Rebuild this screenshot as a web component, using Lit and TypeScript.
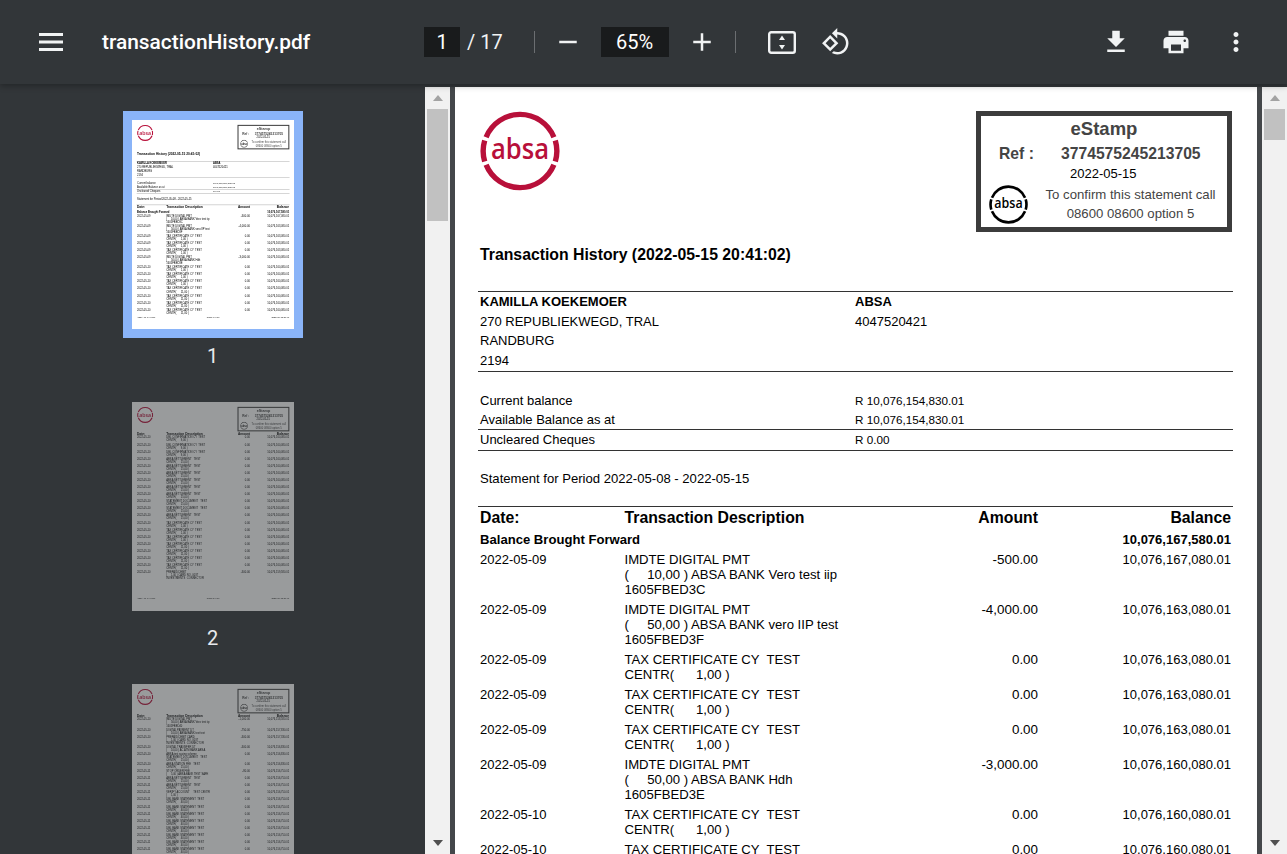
import { LitElement, html, css, svg, nothing } from 'lit';
import { customElement, property } from 'lit/decorators.js';

type Row = { date: string; lines: string[]; amount: string; balance: string };

const row = (date: string, text: string, amount: string, balance: string): Row => ({
  date,
  lines: text.split('\n'),
  amount,
  balance,
});

const tax = (date: string, n: string, balance: string) =>
  row(date, `TAX CERTIFICATE CY  TEST\nCENTR(      ${n} )`, '0.00', balance);

const BAL = '10,076,163,080.01';
const BAL2 = '10,076,160,080.01';

const PAGE_ONE: Row[] = [
  row('2022-05-09', 'IMDTE DIGITAL PMT\n(     10,00 ) ABSA BANK Vero test iip\n1605FBED3C', '-500.00', '10,076,167,080.01'),
  row('2022-05-09', 'IMDTE DIGITAL PMT\n(     50,00 ) ABSA BANK vero IIP test\n1605FBED3F', '-4,000.00', BAL),
  tax('2022-05-09', '1,00', BAL),
  tax('2022-05-09', '1,00', BAL),
  tax('2022-05-09', '1,00', BAL),
  row('2022-05-09', 'IMDTE DIGITAL PMT\n(     50,00 ) ABSA BANK Hdh\n1605FBED3E', '-3,000.00', BAL2),
  tax('2022-05-10', '1,00', BAL2),
  tax('2022-05-10', '1,00', BAL2),
  tax('2022-05-10', '1,00', BAL2),
  tax('2022-05-10', '11,00', BAL2),
  tax('2022-05-10', '11,00', BAL2),
  tax('2022-05-10', '11,00', BAL2),
  tax('2022-05-10', '11,00', BAL2),
];

const PAGE_TWO: Row[] = [
  ...Array.from({ length: 3 }, () => row('2022-05-10', 'DBL CONFIRMATION CY  TEST\nCENTR(      9,00 )', '0.00', BAL2)),
  ...Array.from({ length: 6 }, () => row('2022-05-10', 'ABSA SETTLEMENT   TEST\nCENTR(      15,00 )', '0.00', BAL2)),
  ...Array.from({ length: 2 }, () => row('2022-05-10', 'STATEMENT DOCUMENT   TEST\nCENTR(      15,00 )', '0.00', BAL2)),
  row('2022-05-10', 'ABSA SETTLEMENT   TEST\nCENTR(      15,00 )', '0.00', BAL2),
  ...Array.from({ length: 3 }, () => tax('2022-05-10', '1,00', BAL2)),
  ...Array.from({ length: 4 }, () => tax('2022-05-10', '11,00', BAL2)),
  row('2022-05-10', 'PREPAID DEBIT\n(     1,00 ) CARD NO. 0037\nINVESTMENTS  CONNECTOR', '-500.00', '10,076,159,580.01'),
];

const PAGE_THREE: Row[] = [
  row('2022-05-10', 'IMDTE DIGITAL PMT\n(     50,00 ) ABSA BANK Vero test iip\n1605FBED40', '-1,000.00', '10,076,158,580.01'),
  row('2022-05-10', 'DIGITAL PAYMENT DT\n(     10,00 ) ABSA BANK test test', '-750.00', '10,076,157,830.01'),
  row('2022-05-10', 'PREPAID DEBIT CARD\n(     1,00 ) CARD NO. 0037\nINVESTMENTS  CONNECTOR', '-500.00', '10,076,157,330.01'),
  row('2022-05-10', 'DIGITAL TRANSFER DT\n(     10,00 ) AC ATM BANK ABSA', '-500.00', '10,076,156,830.01'),
  row('2022-05-10', 'ABSA test saving scheme\nSTATEMENT DOCUMENT   TEST\nCENTR(      15,00 )', '0.00', '10,076,156,830.01'),
  row('2022-05-10', 'ABSA STATION FEE   TEST\nCENTR(      15,00 )', '0.00', '10,076,156,830.01'),
  row('2022-05-11', 'STOP ORDER FEE\n(     5,00 ) ABSA BANK TEST SAFE', '-80.00', '10,076,156,750.01'),
  ...Array.from({ length: 2 }, () => row('2022-05-11', 'ABSA SETTLEMENT   TEST\nCENTR(      15,00 )', '0.00', '10,076,156,750.01')),
  row('2022-05-11', 'VERIFY ACCOUNT     TEST CENTR\n(     1,00 )', '0.00', '10,076,156,750.01'),
  ...Array.from({ length: 8 }, () => row('2022-05-11', 'DBL BANK STATEMENT  TEST\nCENTR(      40,00 )', '0.00', '10,076,156,750.01')),
];

@customElement('absa-logo')
class AbsaLogo extends LitElement {
  static styles = css`
    :host {
      display: block;
      color: inherit;
    }
    svg {
      display: block;
      width: 100%;
      height: 100%;
    }
    text {
      font-family: 'Open Sans', sans-serif;
      font-weight: 600;
      font-size: 28px;
      fill: currentColor;
    }
    path {
      fill: none;
      stroke: currentColor;
      stroke-width: 5.4;
    }
  `;

  render() {
    return html`<svg viewBox="0 0 80 80">
      ${svg`
        <path d="M6.1 26.2 A36.6 36.6 0 0 1 73.9 26.2"/>
        <path d="M6.1 53.8 A36.6 36.6 0 0 0 73.9 53.8"/>
        <path d="M4.7 29.5 A36.6 36.6 0 0 0 4.7 50.5"/>
        <path d="M75.3 29.5 A36.6 36.6 0 0 1 75.3 50.5"/>
        <text x="40" y="48" text-anchor="middle" textLength="58" lengthAdjust="spacingAndGlyphs">absa</text>
      `}
    </svg>`;
  }
}

@customElement('statement-page')
class StatementPage extends LitElement {
  static styles = css`
    :host {
      display: flex;
      flex-direction: column;
      box-sizing: border-box;
      width: 802px;
      height: 1035px;
      padding: 24px 24px 0 23px;
      background: #fff;
      color: #000;
      font-family: 'Liberation Sans', Arial, sans-serif;
      font-size: 13px;
      line-height: 15px;
    }
    .top {
      display: flex;
      justify-content: space-between;
      align-items: flex-start;
      padding-left: 2px;
    }
    absa-logo.brand {
      width: 80px;
      height: 80px;
      color: #b8103a;
    }
    .stamp {
      box-sizing: border-box;
      width: 256px;
      height: 121px;
      margin-right: 1px;
      border: 5px solid #3c3c3c;
      color: #444;
    }
    .stamp-title {
      margin-top: 3px;
      text-align: center;
      font-size: 18.5px;
      line-height: 20px;
      font-weight: 700;
    }
    .stamp-ref {
      display: grid;
      grid-template-columns: 62px auto;
      margin-top: 5px;
      padding-left: 18px;
      font-size: 15.7px;
      line-height: 20px;
      font-weight: 700;
    }
    .stamp-date {
      padding-left: 89px;
      color: #000;
      line-height: 20px;
    }
    .stamp-foot {
      display: grid;
      grid-template-columns: 39px 1fr;
      padding-left: 8px;
      align-items: center;
    }
    absa-logo.mini {
      width: 39px;
      height: 39px;
      margin-top: 1px;
      color: #000;
    }
    .stamp-note {
      text-align: center;
      padding-left: 16px;
      padding-right: 10px;
      line-height: 19px;
      font-size: 13.2px;
      white-space: nowrap;
    }
    h1 {
      margin: 13px 0 0;
      padding-left: 2px;
      font-size: 15.8px;
      line-height: 20px;
      font-weight: 700;
    }
    .holder {
      display: grid;
      grid-template-columns: 375px 1fr;
      margin-top: 26px;
      padding: 0 2px 1px;
      border-top: 1px solid #333;
      border-bottom: 1px solid #333;
      font-size: 13px;
      line-height: 19.5px;
    }
    .strong {
      font-weight: 700;
    }
    .balances {
      margin-top: 19px;
      font-size: 13px;
    }
    .bal-row {
      display: grid;
      grid-template-columns: 375px 1fr;
      padding: 0 2px;
      line-height: 19px;
    }
    .bal-row span:last-child {
      font-size: 11.7px;
    }
    .bal-row.ruled {
      line-height: 20px;
      border-top: 1px solid #333;
      border-bottom: 1px solid #333;
    }
    .period {
      margin-top: 20px;
      padding-left: 2px;
      font-size: 13.1px;
    }
    .table {
      margin-top: 3px;
    }
    .table.first {
      margin-top: 20px;
      border-top: 1px solid #333;
    }
    .grid {
      display: grid;
      grid-template-columns: 144.5px 1fr 100px 193px;
      padding: 0 2px;
    }
    .grid > :nth-child(n + 3) {
      text-align: right;
    }
    .head {
      padding-top: 2px;
      font-size: 15.8px;
      line-height: 18px;
      font-weight: 700;
    }
    .forward {
      margin-top: 5px;
      margin-bottom: 5px;
      font-size: 13.1px;
      line-height: 15px;
      font-weight: 700;
    }
    .forward span:first-child {
      grid-column: 1 / 3;
    }
    .forward span:last-child {
      grid-column: 4;
      text-align: right;
      font-size: 13px;
    }
    .row {
      padding-bottom: 5px;
      font-size: 13px;
    }
    .row .desc {
      font-size: 13.15px;
      white-space: pre;
    }
    .row .amount {
      font-size: 13.4px;
    }
    .footer {
      display: grid;
      grid-template-columns: 1fr auto 1fr;
      margin-top: auto;
      margin-bottom: 57px;
      padding: 0 2px;
      font-size: 11px;
    }
    .footer span:last-child {
      text-align: right;
    }
  `;

  @property({ type: Number }) page = 1;
  @property({ attribute: false }) rows: Row[] = [];

  private _stamp() {
    return html`
      <div class="stamp">
        <div class="stamp-title">eStamp</div>
        <div class="stamp-ref"><span>Ref :</span><span>3774575245213705</span></div>
        <div class="stamp-date">2022-05-15</div>
        <div class="stamp-foot">
          <absa-logo class="mini"></absa-logo>
          <div class="stamp-note">To confirm this statement call<br />08600 08600 option 5</div>
        </div>
      </div>
    `;
  }

  private _intro() {
    return html`
      <h1>Transaction History (2022-05-15 20:41:02)</h1>
      <div class="holder">
        <span class="strong">KAMILLA KOEKEMOER</span><span class="strong">ABSA</span>
        <span>270 REPUBLIEKWEGD, TRAL</span><span>4047520421</span>
        <span>RANDBURG</span><span></span>
        <span>2194</span><span></span>
      </div>
      <div class="balances">
        <div class="bal-row"><span>Current balance</span><span>R 10,076,154,830.01</span></div>
        <div class="bal-row"><span>Available Balance as at</span><span>R 10,076,154,830.01</span></div>
        <div class="bal-row ruled"><span>Uncleared Cheques</span><span>R 0.00</span></div>
      </div>
      <div class="period">Statement for Period 2022-05-08 - 2022-05-15</div>
    `;
  }

  render() {
    const first = this.page === 1;
    return html`
      <div class="top">
        <absa-logo class="brand"></absa-logo>
        ${this._stamp()}
      </div>
      ${first ? this._intro() : nothing}
      <div class="table ${first ? 'first' : ''}">
        <div class="grid head">
          <span>Date:</span><span>Transaction Description</span><span>Amount</span><span>Balance</span>
        </div>
        ${first
          ? html`<div class="grid forward"><span>Balance Brought Forward</span><span>10,076,167,580.01</span></div>`
          : nothing}
        ${this.rows.map(
          (r) => html`
            <div class="grid row">
              <span>${r.date}</span>
              <span class="desc">${r.lines.join('\n')}</span>
              <span class="amount">${r.amount}</span>
              <span>${r.balance}</span>
            </div>
          `
        )}
      </div>
      <div class="footer">
        <span>ABSA-01-04-0190</span>
        <span>Page ${this.page} of 17</span>
        <span>2022-05-15 20:41</span>
      </div>
    `;
  }
}

@customElement('v-scrollbar')
class VScrollbar extends LitElement {
  static styles = css`
    :host {
      display: flex;
      flex-direction: column;
      flex: none;
      width: 25px;
      background: #f1f1f1;
    }
    .arrow {
      flex: none;
      height: 22px;
      display: flex;
      align-items: center;
      justify-content: center;
    }
    .arrow i {
      width: 0;
      height: 0;
      border-left: 5.5px solid transparent;
      border-right: 5.5px solid transparent;
    }
    .up i {
      border-bottom: 6px solid #a3a3a3;
    }
    .down i {
      border-top: 6px solid #505050;
    }
    .track {
      flex: 1;
      padding: 0 2px;
    }
    .thumb {
      background: #c1c1c1;
    }
  `;

  @property({ type: Number }) size = 100;

  render() {
    return html`
      <div class="arrow up"><i></i></div>
      <div class="track"><div class="thumb" style="height:${this.size}px"></div></div>
      <div class="arrow down"><i></i></div>
    `;
  }
}

const MD = {
  minus: 'M19 13H5v-2h14v2z',
  plus: 'M19 13h-6v6h-2v-6H5v-2h6V5h2v6h6v2z',
  rotate:
    'M7.34 6.41L.86 12.9l6.49 6.48 6.49-6.48-6.5-6.49zM3.69 12.9l3.66-3.66L11 12.9l-3.66 3.66-3.65-3.66zm15.67-6.26C17.61 4.88 15.3 4 13 4V.76L8.76 5 13 9.24V6c1.79 0 3.58.68 4.95 2.05 2.73 2.73 2.73 7.17 0 9.9C16.58 19.32 14.79 20 13 20c-.97 0-1.94-.21-2.84-.61l-1.49 1.49C10.02 21.62 11.51 22 13 22c2.3 0 4.61-.88 6.36-2.64 3.52-3.51 3.52-9.21 0-12.72z',
  download: 'M19 9h-4V3H9v6H5l7 7 7-7zM5 18v2h14v-2H5z',
  print:
    'M19 8H5c-1.66 0-3 1.34-3 3v6h4v4h12v-4h4v-6c0-1.66-1.34-3-3-3zm-3 11H8v-5h8v5zm3-7c-.55 0-1-.45-1-1s.45-1 1-1 1 .45 1 1-.45 1-1 1zm-1-9H6v4h12V3z',
  dots: 'M12 8c1.1 0 2-.9 2-2s-.9-2-2-2-2 .9-2 2 .9 2 2 2zm0 2c-1.1 0-2 .9-2 2s.9 2 2 2 2-.9 2-2-.9-2-2-2zm0 6c-1.1 0-2 .9-2 2s.9 2 2 2 2-.9 2-2-.9-2-2-2z',
};

const icon = (d: string) => html`<svg class="icon" viewBox="0 0 24 24"><path d=${d}></path></svg>`;

@customElement('app-root')
export class AppRoot extends LitElement {
  static styles = css`
    :host {
      display: block;
      height: 100vh;
      overflow: hidden;
      background: #323639;
      font-family: Roboto, sans-serif;
      color: #f1f3f4;
    }
    .toolbar {
      position: relative;
      z-index: 2;
      display: flex;
      align-items: center;
      box-sizing: border-box;
      height: 84px;
      background: #323639;
      box-shadow: 0 2px 6px rgba(0, 0, 0, 0.3);
    }
    .left {
      flex: none;
      width: 424px;
      display: flex;
      align-items: center;
      padding-left: 39px;
      box-sizing: border-box;
    }
    .menu {
      display: block;
      width: 24px;
      height: 18px;
      fill: #f1f3f4;
    }
    .title {
      margin-left: 39px;
      font-size: 20.9px;
      font-weight: 500;
      color: #fff;
      white-space: nowrap;
    }
    .center {
      display: flex;
      align-items: center;
    }
    .field {
      display: flex;
      align-items: center;
      justify-content: center;
      height: 30px;
      background: #191b1c;
      font-size: 20px;
      color: #fff;
    }
    .field.page {
      width: 36px;
    }
    .field.zoom {
      width: 68px;
      margin-left: 17.5px;
    }
    .total {
      width: 74px;
      padding-left: 7px;
      box-sizing: border-box;
      font-size: 20px;
    }
    .sep {
      width: 1px;
      height: 22px;
      background: #6b6e71;
    }
    .icon {
      display: block;
      flex: none;
      width: 30px;
      height: 30px;
      fill: #f1f3f4;
    }
    .minus {
      margin-left: 18px;
    }
    .plus {
      margin-left: 18px;
    }
    .sep.second {
      margin-left: 18.5px;
    }
    .fit {
      margin-left: 31px;
      width: 30px;
      height: 30px;
    }
    .fit rect {
      fill: none;
      stroke: #f1f3f4;
      stroke-width: 2.4;
    }
    .rotate {
      margin-left: 24px;
    }
    .right {
      margin-left: auto;
      display: flex;
      align-items: center;
      gap: 30px;
      padding-right: 36px;
    }
    .body {
      display: flex;
      height: calc(100vh - 84px);
    }
    .sidebar {
      flex: none;
      width: 425px;
      overflow: hidden;
      display: flex;
      flex-direction: column;
      align-items: center;
      padding-top: 27px;
      box-sizing: border-box;
    }
    .thumb-item {
      flex: none;
      display: flex;
      flex-direction: column;
      align-items: center;
      margin-bottom: 24px;
    }
    .thumb-frame {
      width: 162px;
      height: 209px;
      border: 9px solid transparent;
      overflow: hidden;
    }
    .thumb-item.active .thumb-frame {
      border-color: #8ab4f8;
    }
    .thumb-item:not(.active) statement-page {
      opacity: 0.5;
    }
    statement-page.small {
      transform: scale(0.2025);
      transform-origin: 0 0;
      filter: blur(2.8px);
    }
    .thumb-label {
      margin-top: 5px;
      font-size: 20px;
      line-height: 26px;
      color: #e8eaed;
    }
    .viewer {
      flex: 1;
      min-width: 0;
      display: flex;
      padding-top: 3px;
    }
    .viewport {
      flex: 1;
      min-width: 0;
      overflow: hidden;
      background: #44474a;
      display: flex;
      justify-content: center;
    }
    statement-page.full {
      flex: none;
    }
  `;

  private _thumb(page: number, rows: Row[], active = false) {
    return html`
      <div class="thumb-item ${active ? 'active' : ''}">
        <div class="thumb-frame">
          <statement-page class="small" .page=${page} .rows=${rows}></statement-page>
        </div>
        <div class="thumb-label">${page}</div>
      </div>
    `;
  }

  render() {
    return html`
      <div class="toolbar">
        <div class="left">
          <svg class="menu" viewBox="0 0 24 18">
            <rect y="0" width="24" height="3"></rect>
            <rect y="7.5" width="24" height="3"></rect>
            <rect y="15" width="24" height="3"></rect>
          </svg>
          <span class="title">transactionHistory.pdf</span>
        </div>
        <div class="center">
          <div class="field page">1</div>
          <div class="total">/ 17</div>
          <div class="sep"></div>
          <span class="minus">${icon(MD.minus)}</span>
          <div class="field zoom">65%</div>
          <span class="plus">${icon(MD.plus)}</span>
          <div class="sep second"></div>
          <svg class="fit" viewBox="0 0 30 30">
            <rect x="2.2" y="5.2" width="25.6" height="20.6" rx="2"></rect>
            <path d="M15 8.5l3 4.5h-6zM15 22.5l-3-4.5h6z" fill="#f1f3f4"></path>
          </svg>
          <span class="rotate">${icon(MD.rotate)}</span>
        </div>
        <div class="right">
          ${icon(MD.download)} ${icon(MD.print)} ${icon(MD.dots)}
        </div>
      </div>
      <div class="body">
        <div class="sidebar">
          ${this._thumb(1, PAGE_ONE, true)} ${this._thumb(2, PAGE_TWO)} ${this._thumb(3, PAGE_THREE)}
        </div>
        <div class="viewer">
          <v-scrollbar size="112"></v-scrollbar>
          <div class="viewport">
            <statement-page class="full" .page=${1} .rows=${PAGE_ONE}></statement-page>
          </div>
          <v-scrollbar size="31"></v-scrollbar>
        </div>
      </div>
    `;
  }
}

void AbsaLogo;
void StatementPage;
void VScrollbar;
